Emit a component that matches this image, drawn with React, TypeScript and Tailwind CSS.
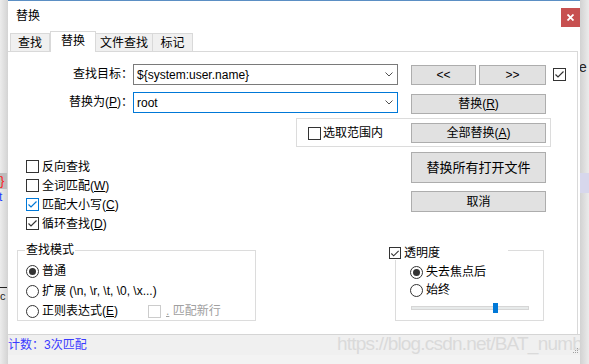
import React from "react";

const FONT = "font-['Liberation_Sans','Noto_Sans_CJK_SC',sans-serif]";

function Button({ className, children }: { className: string; children: React.ReactNode }) {
  return (
    <div
      className={`flex items-center justify-center border border-[#adadad] bg-[#e1e1e1] text-[12px] leading-none text-black ${className}`}
    >
      {children}
    </div>
  );
}

function Check({ checked = false, tone = "dark", size = "w-[13px] h-[13px]" }: { checked?: boolean; tone?: "dark" | "blue" | "off"; size?: string }) {
  const border =
    tone === "blue" ? "border-[#0078d7]" : tone === "off" ? "border-[#cccccc]" : "border-[#333333]";
  const stroke = tone === "blue" ? "#0078d7" : "#333333";
  return (
    <div className={`flex shrink-0 items-center justify-center border bg-white ${border} ${size}`}>
      {checked && (
        <svg width="11" height="11" viewBox="0 0 11 11">
          <polyline points="1.5,5.5 4,8 9.5,2.5" fill="none" stroke={stroke} strokeWidth="1.2" />
        </svg>
      )}
    </div>
  );
}

function Radio({ on = false }: { on?: boolean }) {
  return (
    <div className="flex h-[13px] w-[13px] shrink-0 items-center justify-center rounded-full border border-[#333333] bg-white">
      {on && <div className="h-[7px] w-[7px] rounded-full bg-[#333333]" />}
    </div>
  );
}

function M({ children }: { children: React.ReactNode }) {
  return (
    <>
      (<span className="underline">{children}</span>)
    </>
  );
}

function Combo({ value, focused }: { value: string; focused?: boolean }) {
  return (
    <div
      className={`flex h-[21px] w-[265px] items-center justify-between border bg-white pl-[3px] pr-[4px] text-[12px] ${
        focused ? "border-[#0078d7]" : "border-[#7a7a7a]"
      }`}
    >
      <span className="leading-none">{value}</span>
      <svg width="8" height="5" viewBox="0 0 8 5">
        <polyline points="0.5,0.5 4,4 7.5,0.5" fill="none" stroke="#505050" strokeWidth="1" />
      </svg>
    </div>
  );
}

export default function App() {
  return (
    <div className={`flex h-[364px] w-[589px] overflow-hidden bg-[#f3f3f3] text-black ${FONT}`}>
      {/* app behind, left side */}
      <div className="relative h-full w-[8px] overflow-hidden bg-gradient-to-r from-[#ececec] to-[#d3d3d3]">
        <div className="absolute left-0 top-[173px] h-[16px] w-[7px] bg-[#bcbcbc] text-[13px] leading-[16px] text-[#ff1a1a]">{"}"}</div>
        <div className="absolute -left-[1px] top-[190px] text-[12px] leading-[14px] text-[#2040ff]">t</div>
        <div className="absolute left-0 top-[287px] h-[1px] w-[7px] bg-[#222222]" />
        <div className="absolute left-0 top-[289px] text-[11px] leading-[14px] text-[#222222]">c</div>
      </div>

      {/* dialog */}
      <div className="relative flex w-[572px] flex-col">
        {/* title bar */}
        <div className="flex h-[31px] items-start justify-between border-t border-[#5b8fc4] bg-white">
          <div className="pl-[8px] pt-[7px] text-[12px] leading-[16px]">替换</div>
          <div className="mt-[7px] flex h-[19px] w-[19px] items-center justify-center bg-[#c75050]">
            <svg width="7" height="7" viewBox="0 0 7 7">
              <path d="M0.5 0.5 L6.5 6.5 M6.5 0.5 L0.5 6.5" stroke="white" strokeWidth="1.8" />
            </svg>
          </div>
        </div>

        {/* tabs */}
        <div className="flex h-[20px] items-end bg-white pl-[2px] text-[12px]">
          <div className="flex h-[18px] w-[40px] items-center justify-center border border-b-0 border-[#d9d9d9] bg-[#f0f0f0]">查找</div>
          <div className="relative z-10 -mb-[1px] flex h-[21px] w-[46px] items-center justify-center border border-b-0 border-[#d9d9d9] bg-white pb-[2px]">替换</div>
          <div className="flex h-[18px] w-[57px] items-center justify-center border border-b-0 border-l-0 border-[#d9d9d9] bg-[#f0f0f0]">文件查找</div>
          <div className="flex h-[18px] w-[40px] items-center justify-center border border-b-0 border-l-0 border-[#d9d9d9] bg-[#f0f0f0]">标记</div>
        </div>

        {/* tab page */}
        <div className="h-[283px] bg-white">
          <div className="h-full w-[570px] border-r border-t border-[#d9d9d9] text-[12px]">
            {/* find what */}
            <div className="mt-[12px] flex items-start">
              <div className="w-[125px] text-right leading-[21px]">查找目标：</div>
              <Combo value="${system:user.name}" />
              <Button className="ml-[13px] mt-[1px] h-[20px] w-[65px]">&lt;&lt;</Button>
              <Button className="ml-[3px] mt-[1px] h-[20px] w-[67px]">&gt;&gt;</Button>
              <div className="ml-[7px] mt-[4px]">
                <Check checked />
              </div>
            </div>

            {/* replace with */}
            <div className="mt-[7px] flex items-start">
              <div className="w-[125px] text-right leading-[21px]">
                替换为<M>P</M>：
              </div>
              <Combo value="root" focused />
              <Button className="ml-[13px] mt-[2px] h-[20px] w-[135px]">
                替换<M>R</M>
              </Button>
            </div>

            {/* in selection */}
            <div className="ml-[288px] mt-[4px] flex h-[29px] w-[255px] items-start border border-[#dcdcdc]">
              <div className="flex w-[114px] items-center gap-[2px] pl-[11px] pt-[6px] leading-[17px]">
                <Check />
                <span>选取范围内</span>
              </div>
              <Button className="mt-[4px] h-[20px] w-[135px]">
                全部替换<M>A</M>
              </Button>
            </div>

            {/* options + action buttons */}
            <div className="flex">
              <div className="w-[403px] pl-[18px] pt-[10px]">
                <div className="flex h-[19px] items-center gap-[3px]">
                  <Check />
                  <span>反向查找</span>
                </div>
                <div className="flex h-[19px] items-center gap-[3px]">
                  <Check />
                  <span>
                    全词匹配<M>W</M>
                  </span>
                </div>
                <div className="flex h-[19px] items-center gap-[3px]">
                  <Check checked tone="blue" />
                  <span>
                    匹配大小写<M>C</M>
                  </span>
                </div>
                <div className="flex h-[19px] items-center gap-[3px]">
                  <Check checked />
                  <span>
                    循环查找<M>D</M>
                  </span>
                </div>
              </div>
              <div className="pt-[5px]">
                <Button className="h-[31px] w-[135px] text-[13px]">替换所有打开文件</Button>
                <Button className="mt-[8px] h-[21px] w-[135px]">取消</Button>
              </div>
            </div>

            {/* search mode + transparency */}
            <div className="mt-[17px] flex items-start">
              <div className="relative ml-[9px] h-[71px] w-[239px] border border-[#dcdcdc] pl-[8px] pt-[10px]">
                <div className="absolute -top-[9px] left-[7px] bg-white px-[1px] leading-[16px]">查找模式</div>
                <div className="flex h-[20px] items-center gap-[3px]">
                  <Radio on />
                  <span>普通</span>
                </div>
                <div className="flex h-[20px] items-center gap-[3px]">
                  <Radio />
                  <span>扩展 (\n, \r, \t, \0, \x...)</span>
                </div>
                <div className="flex h-[20px] items-center">
                  <div className="flex w-[122px] items-center gap-[3px]">
                    <Radio />
                    <span>
                      正则表达式<M>E</M>
                    </span>
                  </div>
                  <Check tone="off" />
                  <span className="ml-[5px] text-[#a0a0a0]">
                    <span className="underline">.</span> 匹配新行
                  </span>
                </div>
              </div>

              <div className="relative ml-[139px] h-[71px] w-[149px] border border-[#dcdcdc] pl-[14px] pt-[12px]">
                <div className="absolute -left-[7px] -top-[5px] flex h-[14px] w-[119px] items-center gap-[3px] bg-white">
                  <Check checked size="w-[12px] h-[12px]" />
                  <span className="leading-[14px]">透明度</span>
                </div>
                <div className="flex h-[18px] items-center gap-[3px]">
                  <Radio on />
                  <span>失去焦点后</span>
                </div>
                <div className="flex h-[18px] items-center gap-[3px]">
                  <Radio />
                  <span>始终</span>
                </div>
                <div className="relative ml-[1px] mt-[7px] h-[4px] w-[118px] border border-[#d6d6d6] bg-[#e7eaea]">
                  <div className="absolute -top-[4px] left-[81px] h-[10px] w-[5px] bg-[#0078d7]" />
                </div>
              </div>
            </div>
          </div>
        </div>

        {/* status bar */}
        <div className="h-[21px] border-t border-[#d5d5d5] bg-[#f0f0f0]">
          <div className="text-[12px] leading-[20px] text-[#3a3aff]">计数：3次匹配</div>
        </div>
        <div className="h-[9px] bg-[#f3f3f3]" />

        {/* watermark over the status bar */}
        <div className="absolute left-[329px] top-[333px] whitespace-nowrap text-[19px] leading-[22px] tracking-[-0.8px] text-[#dadada]">
          https://blog.csdn.net/BAT_number
        </div>
        {/* size grip */}
        <div className="absolute left-[565px] top-[348px] grid grid-cols-3 gap-[1px]">
          <div />
          <div />
          <div className="h-[1px] w-[1px] bg-[#a0a0a0]" />
          <div />
          <div className="h-[1px] w-[1px] bg-[#a0a0a0]" />
          <div className="h-[1px] w-[1px] bg-[#a0a0a0]" />
          <div className="h-[1px] w-[1px] bg-[#a0a0a0]" />
          <div className="h-[1px] w-[1px] bg-[#a0a0a0]" />
          <div className="h-[1px] w-[1px] bg-[#a0a0a0]" />
        </div>
      </div>

      {/* app behind, right side */}
      <div className="relative h-full w-[9px] overflow-hidden bg-gradient-to-r from-[#d2d2d2] to-[#ebebeb]">
        <div className="absolute -left-[1px] top-[60px] text-[14px] leading-[14px] text-[#222222]">e</div>
        <div className="absolute left-0 top-[173px] h-[20px] w-[9px] bg-[#d7d7ec]" />
      </div>
    </div>
  );
}
